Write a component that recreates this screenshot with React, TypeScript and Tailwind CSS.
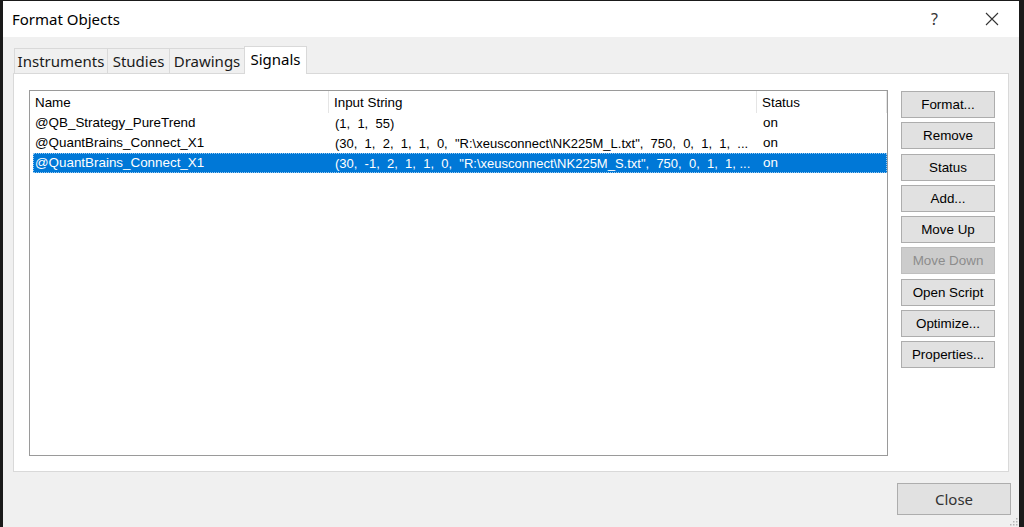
import React from 'react';

const ui = { fontFamily: '"Noto Sans", "Open Sans", sans-serif' };
const arial = { fontFamily: '"Liberation Sans", Arial, sans-serif' };

const tabs = [
  { label: 'Instruments', w: 'w-[94px]' },
  { label: 'Studies', w: 'w-[63px]' },
  { label: 'Drawings', w: 'w-[76px]' },
];

const rows = [
  { name: '@QB_Strategy_PureTrend', input: '(1,  1,  55)', status: 'on' },
  {
    name: '@QuantBrains_Connect_X1',
    input: '(30,  1,  2,  1,  1,  0,  "R:\\xeusconnect\\NK225M_L.txt",  750,  0,  1,  1,  ...',
    status: 'on',
  },
  {
    name: '@QuantBrains_Connect_X1',
    input: '(30,  -1,  2,  1,  1,  0,  "R:\\xeusconnect\\NK225M_S.txt",  750,  0,  1,  1, ...',
    status: 'on',
    selected: true,
  },
];

const buttons = [
  'Format...',
  'Remove',
  'Status',
  'Add...',
  'Move Up',
  'Move Down',
  'Open Script',
  'Optimize...',
  'Properties...',
];

const App = () => {
  return (
    <div className="w-[1024px] h-[527px] bg-[#1a1a1a] pt-[1px] pl-[3px] pr-[5px] overflow-hidden flex">
      <div className="flex-1 flex flex-col bg-[#f0f0f0] relative">
        {/* Title bar */}
        <div className="h-[36px] bg-white flex items-center pl-[9px] shrink-0" style={ui}>
          <span className="text-[15px] text-black leading-none">Format Objects</span>
          <span className="ml-auto mr-[47px] text-[16px] text-[#333] leading-none">?</span>
          <svg width="14" height="14" viewBox="0 0 14 14" className="mr-[20px]">
            <path d="M1 1 L13 13 M13 1 L1 13" stroke="#333" strokeWidth="1.1" fill="none" />
          </svg>
        </div>

        {/* Tabs */}
        <div className="flex items-end pl-[11px] pt-[9px] h-[36px] shrink-0" style={ui}>
          {tabs.map((t) => (
            <div
              key={t.label}
              className={`${t.w} h-[25px] border border-b-0 border-[#d9d9d9] -mr-[1px] bg-[#f0f0f0] flex items-center justify-center text-[15px] text-[#1a1a1a]`}
            >
              {t.label}
            </div>
          ))}
          <div className="w-[63px] h-[28px] border border-b-0 border-[#d9d9d9] bg-white flex items-center justify-center text-[15px] text-black relative top-[1px] z-10 pb-[2px]">
            Signals
          </div>
        </div>

        {/* Tab panel */}
        <div className="ml-[10px] w-[996px] h-[399px] bg-white border border-[#d9d9d9] flex pl-[15px] pt-[16px] shrink-0" style={arial}>
          {/* List view */}
          <div className="w-[859px] h-[366px] border border-[#9a9a9a] flex flex-col">
            <div className="h-[22px] flex text-[13.4px] text-black">
              <div className="w-[299px] pl-[5px] pt-[2px] flex items-center border-r border-[#e5e5e5]">Name</div>
              <div className="w-[428px] pl-[5px] pt-[2px] flex items-center border-r border-[#e5e5e5]">Input String</div>
              <div className="w-[130px] pl-[5px] pt-[2px] flex items-center border-r border-[#e5e5e5]">Status</div>
            </div>
            {rows.map((r, i) => (
              <div
                key={i}
                className={`h-[20px] ml-[3px] w-[854px] flex items-center pt-[1px] text-[13.4px] whitespace-pre ${
                  r.selected ? 'bg-[#0078d7] text-white outline outline-1 outline-dotted outline-[#99c9ef] -outline-offset-1' : 'text-black'
                }`}
              >
                <div className="w-[296px] shrink-0 pl-[2px] overflow-hidden">{r.name}</div>
                <div className="w-[428px] shrink-0 pl-[6px] text-[13px] overflow-hidden">{r.input}</div>
                <div className="w-[130px] shrink-0 pl-[6px]">{r.status}</div>
              </div>
            ))}
          </div>

          {/* Buttons */}
          <div className="ml-[13px] pt-[1px] flex flex-col gap-[4.3px]">
            {buttons.map((b) => {
              const disabled = b === 'Move Down';
              return (
                <div
                  key={b}
                  className={`w-[94px] h-[27px] border flex items-center justify-center pt-[1px] text-[13.4px] ${
                    disabled
                      ? 'bg-[#cccccc] border-[#bfbfbf] text-[#8c8c8c]'
                      : 'bg-[#e1e1e1] border-[#adadad] text-black'
                  }`}
                >
                  {b}
                </div>
              );
            })}
          </div>
        </div>

        {/* Footer */}
        <div className="flex justify-end pr-[8px] pt-[11px]" style={ui}>
          <div className="w-[114px] h-[32px] bg-[#e1e1e1] border border-[#adadad] flex items-center justify-center text-[15px] text-[#333]">
            Close
          </div>
        </div>

        {/* Resize grip */}
        <svg width="9" height="9" viewBox="0 0 9 9" className="absolute right-[1px] bottom-[1px]">
          {[
            [7, 1],
            [7, 4],
            [4, 4],
            [7, 7],
            [4, 7],
            [1, 7],
          ].map(([x, y], i) => (
            <rect key={i} x={x} y={y} width="1.5" height="1.5" fill="#b5b5b5" />
          ))}
        </svg>
      </div>
    </div>
  );
};

export default App;
